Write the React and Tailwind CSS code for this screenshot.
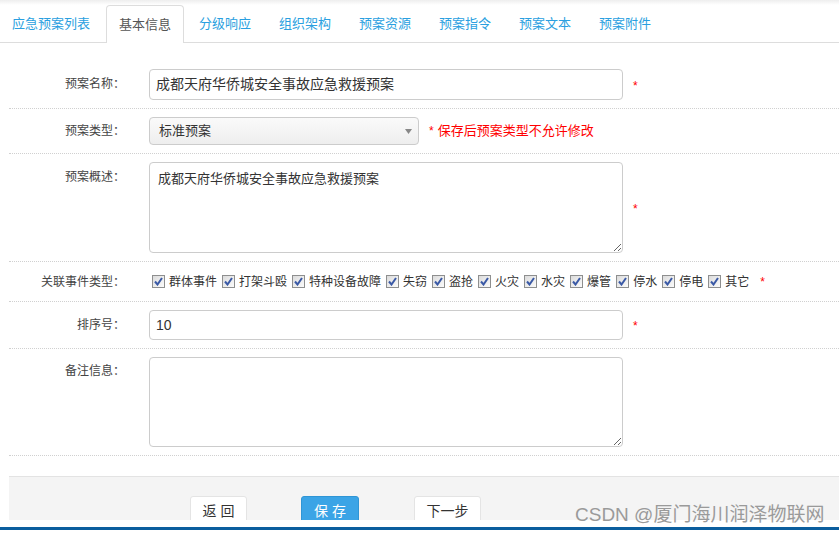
import React from "react";

const tabs = ["应急预案列表", "基本信息", "分级响应", "组织架构", "预案资源", "预案指令", "预案文本", "预案附件"];
const eventTypes = ["群体事件", "打架斗殴", "特种设备故障", "失窃", "盗抢", "火灾", "水灾", "爆管", "停水", "停电", "其它"];

const font = { fontFamily: '"Liberation Sans", "Noto Sans CJK SC", sans-serif' };

const Star = () => <span className="text-[12px] leading-none text-[#f00]">*</span>;

const Check = () => (
  <span className="flex h-[13px] w-[13px] items-center justify-center border border-[#8e8f8f] bg-gradient-to-br from-[#dcdcdc] to-[#fbfbfb]">
    <svg width="9" height="9" viewBox="0 0 9 9">
      <path d="M1 4.5 L3.5 7.5 L8 1" fill="none" stroke="#3b5aa6" strokeWidth="2" />
    </svg>
  </span>
);

const Row = ({ label, children, labelPt = "pt-[7px]" }) => (
  <div className="flex border-b border-dotted border-[#d0d0d0] py-[8px]">
    <div className={`w-[116px] shrink-0 text-right text-[12px] leading-[16px] text-[#444] ${labelPt}`}>{label}</div>
    <div className="ml-[24px] flex items-center">{children}</div>
  </div>
);

export default function App() {
  return (
    <div className="relative h-[535px] w-[839px] overflow-hidden bg-white" style={font}>
      {/* tabs */}
      <div className="h-[5px] bg-gradient-to-b from-[#eeeeee] to-white" />
      <div className="flex h-[38px] border-b border-[#dddddd]">
        {tabs.map((t, i) =>
          i === 1 ? (
            <div
              key={t}
              className="-mb-px mr-[2px] flex h-[38px] items-center rounded-t-[4px] border border-b-0 border-[#dddddd] bg-white px-[12px] text-[13px] text-[#555]"
            >
              {t}
            </div>
          ) : (
            <div key={t} className={`mr-[2px] flex items-center px-[13px] text-[13px] text-[#2a9fe0] ${i === 0 ? "pl-[12px] pr-[14px]" : ""}`}>
              {t}
            </div>
          )
        )}
      </div>

      {/* form */}
      <div className="ml-[9px] mt-[18px]">
        <Row label="预案名称：" labelPt="pt-[7px]">
          <div className="flex h-[31px] w-[474px] items-center rounded-[4px] border border-[#cccccc] px-[6px] text-[14px] text-[#333]">
            成都天府华侨城安全事故应急救援预案
          </div>
          <span className="ml-[10px]"><Star /></span>
        </Row>

        <Row label="预案类型：" labelPt="pt-[6px]">
          <div className="flex h-[28px] w-[270px] items-center justify-between rounded-[4px] border border-[#cccccc] bg-gradient-to-b from-[#fafafa] to-[#eeeeee] pl-[9px] pr-[6px] text-[13px] text-[#333]">
            <span>标准预案</span>
            <svg width="7" height="5" viewBox="0 0 7 5"><path d="M0 0 L7 0 L3.5 5 Z" fill="#888" /></svg>
          </div>
          <span className="ml-[10px] flex items-center gap-[4px] text-[13px] text-[#f00]">
            <Star />
            <span>保存后预案类型不允许修改</span>
          </span>
        </Row>

        <Row label="预案概述：" labelPt="pt-[7px]">
          <textarea
            readOnly
            defaultValue="成都天府华侨城安全事故应急救援预案"
            className="h-[91px] w-[474px] rounded-[4px] border border-[#cccccc] px-[8px] py-[6px] text-[13px] text-[#333] outline-none"
            style={font}
          />
          <span className="ml-[10px]"><Star /></span>
        </Row>

        <Row label="关联事件类型：" labelPt="pt-[4px]">
          <div className="flex h-[23px] items-center pl-[3px] text-[12px] text-[#333]">
            {eventTypes.map((e) => (
              <span key={e} className="mr-[5px] flex items-center gap-[4px]">
                <Check />
                <span>{e}</span>
              </span>
            ))}
            <span className="ml-[6px]"><Star /></span>
          </div>
        </Row>

        <Row label="排序号：" labelPt="pt-[7px]">
          <div className="flex h-[30px] w-[474px] items-center rounded-[4px] border border-[#cccccc] px-[6px] text-[14px] text-[#333]">
            10
          </div>
          <span className="ml-[10px]"><Star /></span>
        </Row>

        <Row label="备注信息：" labelPt="pt-[6px]">
          <textarea
            readOnly
            className="h-[90px] w-[474px] rounded-[4px] border border-[#cccccc] px-[8px] py-[6px] text-[13px] outline-none"
          />
        </Row>

        {/* footer */}
        <div className="mt-[20px] flex h-[44px] items-start overflow-hidden border-t border-[#e3e3e3] bg-[#f4f4f4] pl-[181px] pt-[19px]">
          <button className="flex h-[30px] w-[57px] items-center justify-center rounded-[3px] border border-[#e4e4e4] bg-white text-[14px] text-[#333]">
            返&nbsp;回
          </button>
          <button className="ml-[54px] flex h-[30px] w-[58px] items-center justify-center rounded-[3px] border border-[#2f95d5] bg-[#3ba4e6] text-[14px] text-white">
            保&nbsp;存
          </button>
          <button className="ml-[55px] flex h-[30px] w-[67px] items-center justify-center rounded-[3px] border border-[#e4e4e4] bg-white text-[14px] text-[#333]">
            下一步
          </button>
        </div>
      </div>

      <div className="h-[7px] bg-white" />
      <div className="h-[3px] bg-[#0b5e9e]" />

      <div className="absolute left-[575px] top-[505px] text-[19px] leading-[19px] text-[#9a9a9a]">
        CSDN @厦门海川润泽物联网
      </div>
    </div>
  );
}
